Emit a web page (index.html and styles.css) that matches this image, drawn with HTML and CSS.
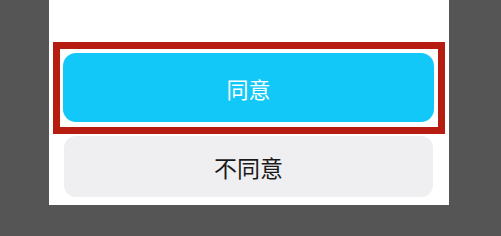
FILE: index.html
```html
<!DOCTYPE html>
<html lang="zh-CN">
<head>
    <meta charset="UTF-8">
    <meta name="viewport" content="width=device-width, initial-scale=1.0">
    <title>同意</title>
    <link rel="stylesheet" href="styles.css">
</head>
<body>
    <div class="panel">
        <!-- Highlighted agree button -->
        <div class="highlight">
            <button class="agree-btn">同意</button>
        </div>
        <button class="disagree-btn">不同意</button>
    </div>
</body>
</html>
```

FILE: styles.css
```css
body {
    margin: 0;
    padding: 0;
    background: #555555;
    font-family: "Noto Sans CJK SC", "Noto Sans", sans-serif;
    height: 236px;
    overflow: hidden;
}

.panel {
    margin-left: 49px;
    width: 400px;
    height: 205px;
    background: #ffffff;
    padding: 42px 0 0 4px;
    box-sizing: border-box;
}

.highlight {
    width: 392px;
    height: 92px;
    box-sizing: border-box;
    border: 7px solid #b71c10;
    padding: 4px 4px 5px 3px;
}

.agree-btn {
    display: block;
    width: 100%;
    height: 100%;
    border: none;
    border-radius: 13px;
    background: #12c8f8;
    color: #ffffff;
    font-family: inherit;
    font-size: 22px;
    padding: 0;
}

.disagree-btn {
    display: block;
    width: 369px;
    height: 61px;
    margin: 2px 0 0 11px;
    border: none;
    border-radius: 12px;
    background: #efeef1;
    color: #1a1a1a;
    font-family: inherit;
    font-size: 23px;
    padding: 0;
}
```
